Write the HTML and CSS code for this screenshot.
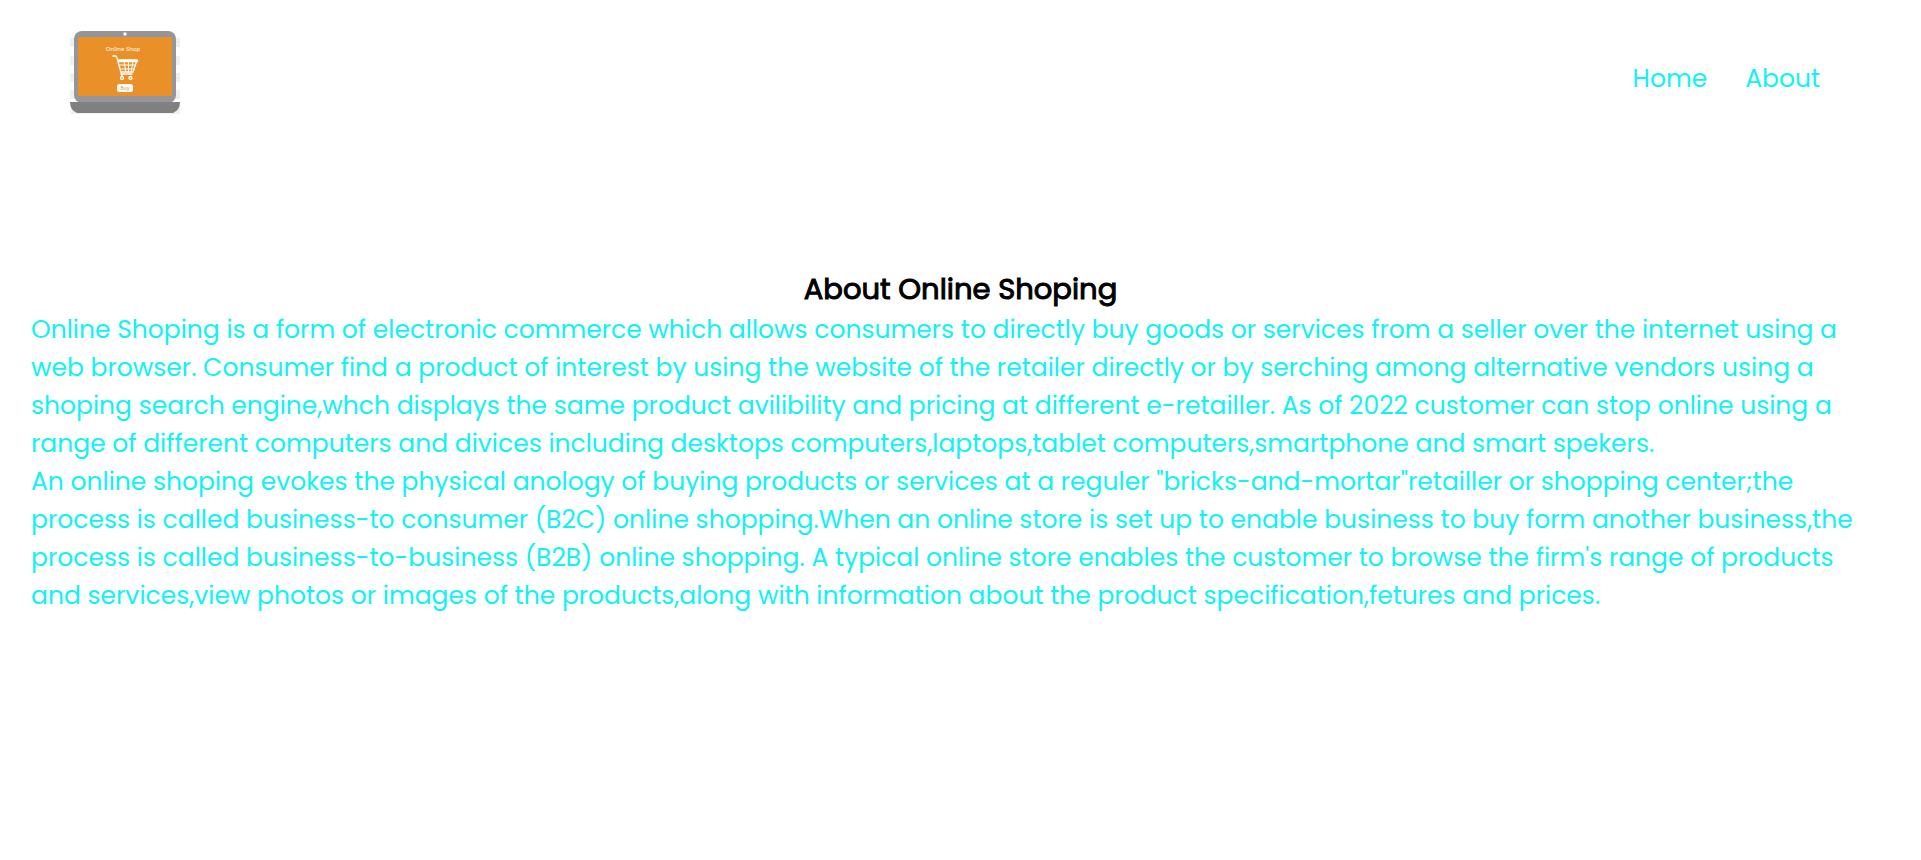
FILE: index.html
```html
<!DOCTYPE html>
<html lang="en">
<head>
<meta charset="utf-8">
<meta name="viewport" content="width=device-width, initial-scale=1">
<title>About Online Shoping</title>
<link rel="stylesheet" href="styles.css">
</head>
<body>
<header class="header">
  <a class="logo" href="#" aria-label="Online Shop">
    <svg class="logo-art" viewBox="0 0 112 86" aria-hidden="true">
      <path fill="#f0f0f0" d="M0 8h5v9H0zM0 26h5v9H0zM0 43h5v9H0zM0 60h5v9H0zM105 8h5v9h-5zM105 26h5v9h-5zM105 43h5v9h-5zM105 60h5v9h-5zM1 76h109v8H1z"/>
      <rect x="4" y="1" width="102" height="72" rx="8" fill="#949699"/>
      <rect x="8" y="7" width="94" height="59" fill="#e99028"/>
      <circle cx="55" cy="4" r="1.700" fill="#fff"/>
      <path fill="#808080" d="M0 72h110q0 8-7 11H7q-7-3-7-11z"/>
      <text class="logo-name" x="53" y="21">Online Shop</text>
      <g fill="none" stroke="#fff" stroke-linecap="round" stroke-linejoin="round">
        <path stroke-width="1.300" d="M43 26h3l1 2 5 18M49 30h18l-4 12H51M51 44h11"/>
        <path stroke-width="2.500" d="M49 31h18"/>
        <path stroke-width="1" d="M50 35h15M51 39h13M54 32l2 10M58.500 32v10M63 32l-2 10"/>
        <circle cx="52" cy="48" r="1.500" stroke-width="1.300"/>
        <circle cx="60.500" cy="48" r="1.500" stroke-width="1.300"/>
      </g>
      <rect x="47" y="54" width="16" height="8" rx="2.500" fill="#fff"/>
      <text class="logo-buy" x="55" y="60">Buy</text>
    </svg>
  </a>
  <nav class="nav">
    <a class="nav-link" href="#">Home</a>
    <a class="nav-link" href="#about">About</a>
  </nav>
</header>
<main class="about" id="about">
  <h1 class="title">About Online Shoping</h1>
  <p class="copy">Online Shoping is a form of electronic commerce which allows consumers to directly buy goods or services from a seller over the internet using a<br>
  web browser. Consumer find a product of interest by using the website of the retailer directly or by serching among alternative vendors using a<br>
  shoping search engine,whch displays the same product avilibility and pricing at different e-retailler. As of 2022 customer can stop online using a<br>
  range of different computers and divices including desktops computers,laptops,tablet computers,smartphone and smart spekers.</p>
  <p class="copy">An online shoping evokes the physical anology of buying products or services at a reguler "bricks-and-mortar"retailler or shopping center;the<br>
  process is called business-to consumer (B2C) online shopping.When an online store is set up to enable business to buy form another business,the<br>
  process is called business-to-business (B2B) online shopping. A typical online store enables the customer to browse the firm's range of products<br>
  and services,view photos or images of the products,along with information about the product specification,fetures and prices.</p>
</main>
</body>
</html>
```
FILE: styles.css
```css
* {
  box-sizing: border-box;
  margin: 0;
  padding: 0;
}

body {
  background: #fff;
  color: #12f2f2;
  font-family: Poppins, Inter, "Liberation Sans", sans-serif;
  font-size: 25px;
  font-weight: 400;
  line-height: 38px;
}

.header {
  display: flex;
  align-items: center;
  justify-content: space-between;
  padding: 30px 101px 31px 70px;
}

.logo,
.logo-art {
  display: block;
  width: 112px;
}

.logo-name,
.logo-buy {
  fill: #fff;
  font-family: "Noto Sans", sans-serif;
  font-size: 6px;
  text-anchor: middle;
}

.logo-buy {
  fill: #e99028;
  font-size: 5px;
}

.nav {
  display: flex;
  gap: 38px;
  padding-top: 12px;
}

.nav-link {
  color: inherit;
  text-decoration: none;
}

.about {
  padding: 122px 31px;
}

.title {
  margin-bottom: 2px;
  color: #000;
  font-size: 29px;
  font-weight: 400;
  line-height: 40px;
  text-align: center;
  -webkit-text-stroke: 1px #000;
}
```
